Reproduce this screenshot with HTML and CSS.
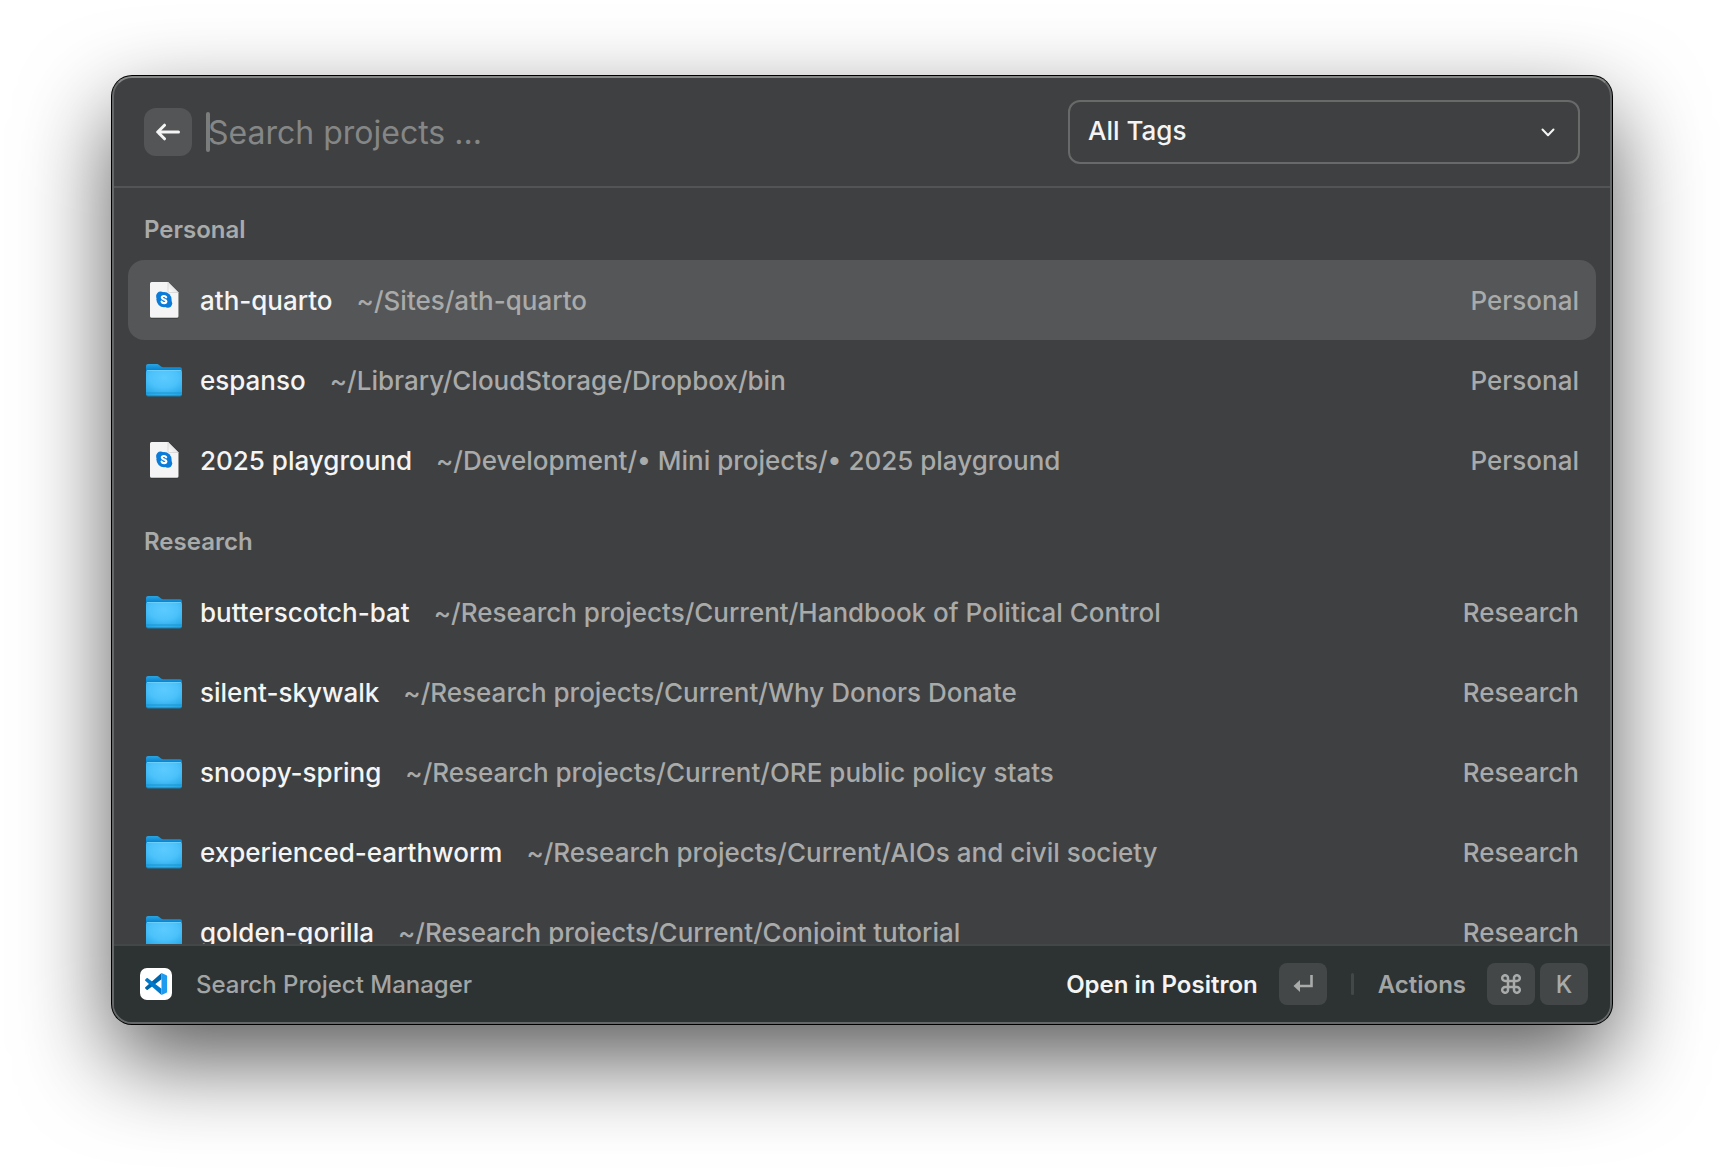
FILE: index.html
```html
<!DOCTYPE html>
<html lang="en">
<head>
    <meta charset="UTF-8">
    <meta name="viewport" content="width=device-width, initial-scale=1.0">
    <title>Search Project Manager</title>
    <link rel="stylesheet" href="styles.css">
</head>
<body>
    <!-- Shared icons -->
    <svg class="icon-defs" width="0" height="0" aria-hidden="true">
        <defs>
            <linearGradient id="folder-back" x1="0" y1="0" x2="0" y2="1">
                <stop offset="0" stop-color="#2ba4e2"/>
                <stop offset="0.4" stop-color="#0a86d2"/>
            </linearGradient>
            <radialGradient id="folder-front" cx="0.5" cy="0.3" r="0.8">
                <stop offset="0" stop-color="#5ccbff"/>
                <stop offset="0.5" stop-color="#4cc2fb"/>
                <stop offset="1" stop-color="#22a4e4"/>
            </radialGradient>
            <linearGradient id="page-fold" x1="0" y1="1" x2="1" y2="0">
                <stop offset="0" stop-color="#ffffff"/>
                <stop offset="1" stop-color="#cfcfcf"/>
            </linearGradient>
            <symbol id="icon-folder" viewBox="0 0 40 40">
                <path d="M2 6a2 2 0 0 1 2-2h8c2 0 3 .6 4 1.800l1 .7c.6.500 1.300.7 2.200.7H36a2 2 0 0 1 2 2V18H2z" fill="url(#folder-back)"/>
                <path d="M2 34h36v.6a2 2 0 0 1-2 2H4a2 2 0 0 1-2-2z" fill="#1580b8"/>
                <path d="M2 12a2 2 0 0 1 2-2h32a2 2 0 0 1 2 2v21.500a2 2 0 0 1-2 2H4a2 2 0 0 1-2-2z" fill="url(#folder-front)"/>
                <path d="M3 10.500h34" stroke="#7ad5ff" stroke-width="0.7"/>
                <path d="M2 33h36" stroke="#178fcd" stroke-width="0.8"/>
            </symbol>
            <symbol id="icon-file" viewBox="0 0 40 40">
                <path d="M6 3.500a1.500 1.500 0 0 1 1.500-1.500H24l10.500 10.500V37a1.500 1.500 0 0 1-1.500 1.500H7.500A1.500 1.500 0 0 1 6 37z" fill="#2e2f30"/>
                <path d="M6 3.500A1.500 1.500 0 0 1 7.500 2H24l10.500 10.500V36.200a1.500 1.500 0 0 1-1.500 1.500H7.500A1.500 1.500 0 0 1 6 36.200z" fill="#f4f4f4"/>
                <path d="M24 2v9a1.500 1.500 0 0 0 1.500 1.500h9z" fill="url(#page-fold)" stroke="#c9c9c9" stroke-width="0.6"/>
                <circle cx="20" cy="19.600" r="7.600" fill="#0a7bd8"/>
                <circle cx="16.500" cy="16" r="4.400" fill="#0a7bd8"/>
                <circle cx="23.800" cy="23.300" r="4.400" fill="#0a7bd8"/>
                <path d="M22.200 17.300c-.4-.9-1.200-1.300-2.200-1.300-1.300 0-2.200.6-2.200 1.600 0 2.400 4.600 1.300 4.600 3.700 0 1.200-1 1.800-2.300 1.800-1.300 0-2.200-.5-2.500-1.500" fill="none" stroke="#fff" stroke-width="2.100" stroke-linecap="round"/>
            </symbol>
        </defs>
    </svg>

    <main class="launcher">
        <header class="search-bar">
            <button class="back-button" type="button" aria-label="Back">
                <svg width="24" height="18" viewBox="0 0 24 18" fill="none" stroke="currentColor" stroke-width="3" stroke-linecap="round" stroke-linejoin="round">
                    <path d="M22.500 9H2M8.500 2.200L1.700 9L8.500 15.800"/>
                </svg>
            </button>
            <span class="caret"></span>
            <input class="search-input" type="text" placeholder="Search projects ..." aria-label="Search projects">
            <div class="tag-filter">
                <select class="tag-select" aria-label="Filter by tag">
                    <option>All Tags</option>
                    <option>Personal</option>
                    <option>Research</option>
                </select>
                <svg class="tag-chevron" width="14" height="9" viewBox="0 0 14 9" fill="none" stroke="currentColor" stroke-width="2" stroke-linecap="round" stroke-linejoin="round">
                    <path d="M1.500 1.500L7 7.300L12.500 1.500"/>
                </svg>
            </div>
        </header>

        <div class="results">
            <section>
                <h2 class="section-title">Personal</h2>
                <ul class="project-list">
                    <li class="project selected">
                        <svg class="project-icon"><use href="#icon-file"/></svg>
                        <span class="project-name">ath-quarto</span>
                        <span class="project-path">~/Sites/ath-quarto</span>
                        <span class="project-tag">Personal</span>
                    </li>
                    <li class="project">
                        <svg class="project-icon"><use href="#icon-folder"/></svg>
                        <span class="project-name">espanso</span>
                        <span class="project-path">~/Library/CloudStorage/Dropbox/bin</span>
                        <span class="project-tag">Personal</span>
                    </li>
                    <li class="project">
                        <svg class="project-icon"><use href="#icon-file"/></svg>
                        <span class="project-name">2025 playground</span>
                        <span class="project-path">~/Development/• Mini projects/• 2025 playground</span>
                        <span class="project-tag">Personal</span>
                    </li>
                </ul>
            </section>
            <section>
                <h2 class="section-title">Research</h2>
                <ul class="project-list">
                    <li class="project">
                        <svg class="project-icon"><use href="#icon-folder"/></svg>
                        <span class="project-name">butterscotch-bat</span>
                        <span class="project-path">~/Research projects/Current/Handbook of Political Control</span>
                        <span class="project-tag">Research</span>
                    </li>
                    <li class="project">
                        <svg class="project-icon"><use href="#icon-folder"/></svg>
                        <span class="project-name">silent-skywalk</span>
                        <span class="project-path">~/Research projects/Current/Why Donors Donate</span>
                        <span class="project-tag">Research</span>
                    </li>
                    <li class="project">
                        <svg class="project-icon"><use href="#icon-folder"/></svg>
                        <span class="project-name">snoopy-spring</span>
                        <span class="project-path">~/Research projects/Current/ORE public policy stats</span>
                        <span class="project-tag">Research</span>
                    </li>
                    <li class="project">
                        <svg class="project-icon"><use href="#icon-folder"/></svg>
                        <span class="project-name">experienced-earthworm</span>
                        <span class="project-path">~/Research projects/Current/AIOs and civil society</span>
                        <span class="project-tag">Research</span>
                    </li>
                    <li class="project">
                        <svg class="project-icon"><use href="#icon-folder"/></svg>
                        <span class="project-name">golden-gorilla</span>
                        <span class="project-path">~/Research projects/Current/Conjoint tutorial</span>
                        <span class="project-tag">Research</span>
                    </li>
                </ul>
            </section>
        </div>

        <footer class="action-bar">
            <svg class="app-icon" viewBox="0 0 32 32" aria-hidden="true">
                <rect width="32" height="32" rx="7" fill="#fff"/>
                <path d="M21.500 5L5.300 19.200a.9.9 0 0 0 0 1.300l1.300 1.200c.4.300.9.300 1.200 0L21.500 11.200z" fill="#0065a9"/>
                <path d="M21.500 27L5.300 12.800a.9.900 0 0 1 0-1.300l1.300-1.200c.4-.3.900-.3 1.200 0L21.500 20.800z" fill="#007acc"/>
                <path d="M21.500 5l5 2.300c.4.200.6.500.6 1v15.400c0 .5-.2.800-.6 1l-5 2.300z" fill="#1f9cf0"/>
            </svg>
            <span class="app-name">Search Project Manager</span>
            <button class="action primary" type="button">
                <span>Open in Positron</span>
                <kbd class="key">
                    <svg width="20" height="18" viewBox="0 0 20 18">
                        <path d="M18.500 0v11H5" fill="none" stroke="currentColor" stroke-width="2.600"/>
                        <path d="M7 5v12L0.500 11z" fill="currentColor"/>
                    </svg>
                </kbd>
            </button>
            <span class="divider"></span>
            <button class="action" type="button">
                <span>Actions</span>
                <span class="keys">
                    <kbd class="key">
                        <svg width="20" height="20" viewBox="0 0 20 20" fill="none" stroke="currentColor" stroke-width="2.500">
                            <path d="M7 7V4.200A2.900 2.900 0 1 0 4.200 7H15.800A2.900 2.900 0 1 0 13 4.200V15.800A2.900 2.900 0 1 0 15.800 13H4.200A2.900 2.900 0 1 0 7 15.800Z"/>
                        </svg>
                    </kbd>
                    <kbd class="key">K</kbd>
                </span>
            </button>
        </footer>
    </main>
</body>
</html>
```
FILE: styles.css
```css
* {
    box-sizing: border-box;
}
body {
    margin: 0;
    height: 100vh;
    padding: 76px 112px 148px;
    background-color: #fff;
    font-family: Inter, sans-serif;
    font-size: 26px;
    color: #f4f4f4;
}
button, input, select, kbd {
    font-family: inherit;
    font-size: inherit;
    color: inherit;
}
.icon-defs {
    position: absolute;
}
.launcher {
    height: 100%;
    display: flex;
    flex-direction: column;
    overflow: hidden;
    background-color: #3f4041;
    border: 2px solid #656868;
    border-top-color: #858787;
    border-radius: 20px;
    box-shadow: 0 0 0 1px #000, 0 36px 90px rgba(0, 0, 0, 0.65);
}

/* Search bar */
.search-bar {
    flex-shrink: 0;
    display: flex;
    align-items: center;
    height: 110px;
    padding: 0 30px;
    border-bottom: 2px solid #525455;
}
.back-button {
    display: flex;
    align-items: center;
    justify-content: center;
    width: 48px;
    height: 48px;
    margin-right: 14px;
    padding: 0;
    border: none;
    border-radius: 12px;
    background-color: #545556;
    cursor: pointer;
}
.caret {
    width: 4px;
    height: 40px;
    margin-right: -2px;
    border-radius: 2px;
    background-color: #7b7d7d;
}
.search-input {
    flex: 1;
    min-width: 0;
    padding: 0;
    border: none;
    outline: none;
    background: none;
    font-size: 32px;
}
.search-input::placeholder {
    color: #858686;
    opacity: 1;
}
.tag-filter {
    position: relative;
    width: 512px;
}
.tag-select {
    appearance: none;
    width: 100%;
    height: 64px;
    padding: 0 18px 4px;
    border: 2px solid #686a6a;
    border-radius: 12px;
    background: none;
    font-weight: 500;
}
.tag-chevron {
    position: absolute;
    right: 25px;
    top: 28px;
    pointer-events: none;
}

/* Results */
.results {
    flex: 1;
    min-height: 0;
    overflow: hidden;
    padding: 0 14px;
}
.section-title {
    height: 72px;
    margin: 0;
    padding: 10px 16px 0;
    font-size: 24px;
    font-weight: 600;
    line-height: 64px;
    color: #a9aaaa;
}
.project-list {
    margin: 0;
    padding: 0;
    list-style: none;
}
.project {
    display: flex;
    align-items: center;
    height: 80px;
    padding: 0 17px 0 16px;
    border-radius: 16px;
    white-space: nowrap;
}
.project.selected {
    background-color: #545657;
}
.project-icon {
    width: 40px;
    height: 40px;
    margin-right: 16px;
}
.project-name {
    margin-right: 24px;
    font-weight: 500;
}
.project-path {
    flex: 1;
    overflow: hidden;
    text-overflow: ellipsis;
}
.project-path,
.project-tag {
    font-weight: 500;
    color: #a9aaaa;
}

/* Action bar */
.action-bar {
    flex-shrink: 0;
    display: flex;
    align-items: center;
    height: 78px;
    padding: 0 22px 0 26px;
    border-top: 2px solid #444748;
    background-color: #2d3233;
    font-size: 24px;
    font-weight: 500;
    color: #a3a5a5;
}
.app-icon {
    width: 32px;
    height: 32px;
    margin-right: 24px;
}
.app-name {
    flex: 1;
}
.action {
    display: flex;
    align-items: center;
    gap: 21px;
    padding: 0;
    border: none;
    background: none;
    font-weight: 600;
    cursor: pointer;
}
.action.primary {
    color: #f4f4f4;
}
.keys {
    display: flex;
    gap: 5px;
}
.key {
    display: flex;
    align-items: center;
    justify-content: center;
    width: 48px;
    height: 42px;
    border-radius: 8px;
    background-color: #434748;
    font-weight: 500;
    color: #a9abab;
}
.divider {
    width: 3px;
    height: 22px;
    margin: 0 24px;
    border-radius: 2px;
    background-color: #434748;
}
```
